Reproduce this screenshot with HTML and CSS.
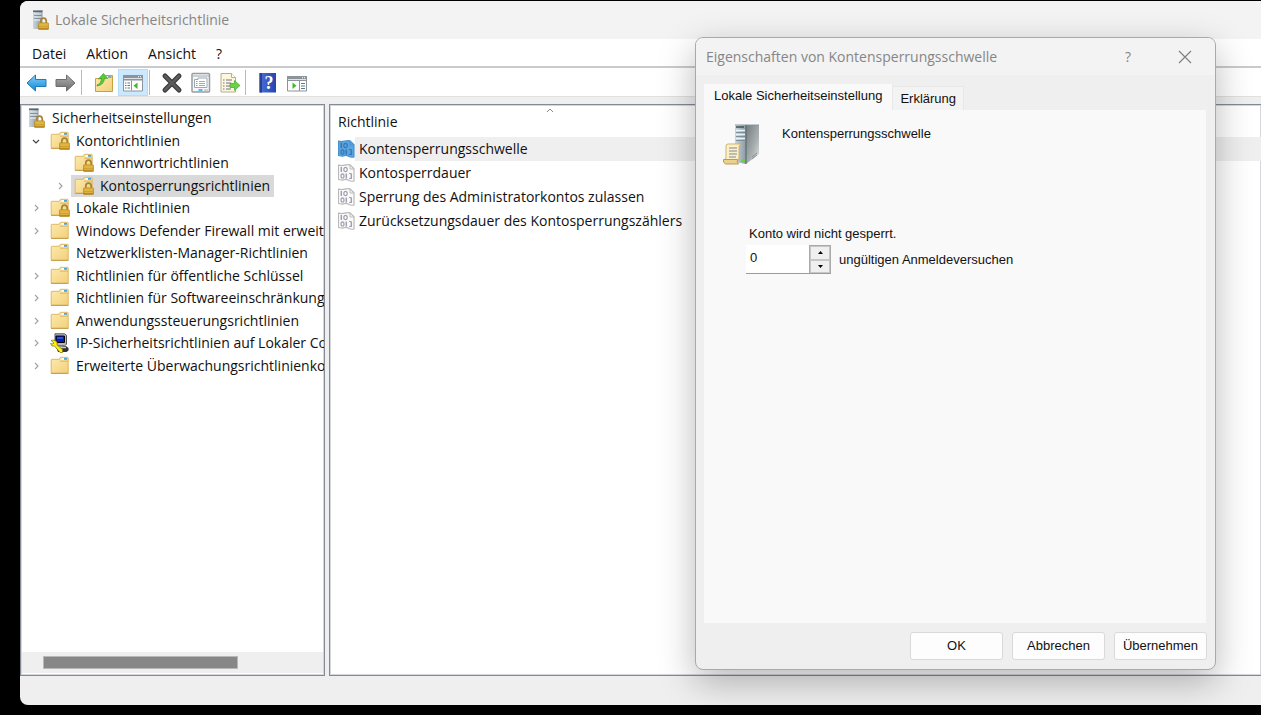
FILE: index.html
```
<!DOCTYPE html>
<html lang="de">
<head>
    <meta charset="UTF-8">
    <meta name="viewport" content="width=device-width, initial-scale=1.0">
    <title>Lokale Sicherheitsrichtlinie</title>
    <link rel="stylesheet" href="styles.css">
</head>
<body>
    <!-- shared icons -->
    <svg class="sprite" aria-hidden="true">
        <defs>
            <linearGradient id="gold" x1="0" y1="0" x2="1" y2="1">
                <stop offset="0" stop-color="#fdeab0"/>
                <stop offset="1" stop-color="#f2d07a"/>
            </linearGradient>
            <linearGradient id="brass" x1="0" y1="0" x2="0" y2="1">
                <stop offset="0" stop-color="#e9bb3e"/>
                <stop offset="1" stop-color="#b18116"/>
            </linearGradient>
            <linearGradient id="steel" x1="0" y1="0" x2="1" y2="0">
                <stop offset="0" stop-color="#cbd5dc"/>
                <stop offset="1" stop-color="#8999a4"/>
            </linearGradient>
            <linearGradient id="side" x1="0" y1="0" x2="1" y2="1">
                <stop offset="0" stop-color="#717b7e"/>
                <stop offset="0.6" stop-color="#a9b0b1"/>
                <stop offset="1" stop-color="#e2e5e5"/>
            </linearGradient>
            <linearGradient id="blue" x1="0" y1="0" x2="0" y2="1">
                <stop offset="0" stop-color="#7fd0fb"/>
                <stop offset="1" stop-color="#1287d6"/>
            </linearGradient>
            <linearGradient id="grey" x1="0" y1="0" x2="0" y2="1">
                <stop offset="0" stop-color="#b0b0b0"/>
                <stop offset="1" stop-color="#6a6a6a"/>
            </linearGradient>
            <linearGradient id="book" x1="0" y1="0" x2="1" y2="0">
                <stop offset="0" stop-color="#4a6fd8"/>
                <stop offset="1" stop-color="#2645ae"/>
            </linearGradient>
        </defs>
        <symbol id="lock" viewBox="0 0 10 12">
            <path d="M2.500 6V3.800a2.500 2.700 0 0 1 5 0V6" fill="none" stroke="#a78338" stroke-width="1.600"/>
            <rect x="0.400" y="5.400" width="9.200" height="6.200" rx="0.600" fill="url(#brass)" stroke="#b28420" stroke-width="0.600"/>
            <path d="M1 7.500h8M1 9.500h8" stroke="#f3cf62" stroke-width="0.600"/>
        </symbol>
        <symbol id="folder" viewBox="0 0 20 20">
            <path d="M1.200 17V4q0-.7.700-.7h7.300l1.200-2h7q.8 0 .8.800V17z" fill="url(#gold)" stroke="#dcb966"/>
            <rect x="11.500" y="2" width="5.500" height="1.800" fill="#fff"/>
            <rect x="14" y="2" width="3" height="1.800" fill="#4ba3dc"/>
            <path d="M10 5.200h8" stroke="#dcb75f"/>
            <path d="M1 17.500h17.500" stroke="#c8a252"/>
        </symbol>
        <symbol id="folder-lock" viewBox="0 0 20 20">
            <use href="#folder" width="20" height="20"/>
            <use href="#lock" x="9" y="6" width="11" height="13"/>
        </symbol>
        <symbol id="server-lock" viewBox="0 0 18 20">
            <path d="M1 .5h9.500v18.500H1z" fill="url(#steel)"/>
            <path d="M1 .5h9.500v1.500H1z" fill="#596871"/>
            <path d="M2 4h7.500M2 7h7.500M2 10h7.500" stroke="#f2f6f8" stroke-width="1.200"/>
            <path d="M2 5.400h7.500M2 8.400h7.500" stroke="#72828e" stroke-width="0.800"/>
            <use href="#lock" x="6" y="7" width="11" height="13"/>
        </symbol>
        <symbol id="policy" viewBox="0 0 17 18">
            <path d="M.5 1.200q3 .8 6 0t5.500-.4l4 4V17q-3 .8-5.500-.8t-6 0L.5 15.500z" fill="var(--paper)" stroke="var(--edge)" stroke-width="1.200"/>
            <path d="M12 1v4h4" fill="none" stroke="var(--edge)"/>
            <path d="M3.300 3v5M8.300 9.500v5M13.300 9.500v5" stroke="var(--ink)" stroke-width="1.500"/>
            <ellipse cx="7.500" cy="5.500" rx="1.700" ry="2.200" fill="none" stroke="var(--ink)" stroke-width="1.200"/>
            <ellipse cx="4.500" cy="12" rx="1.500" ry="2.200" fill="none" stroke="var(--ink)" stroke-width="1.200"/>
            <path d="M11 9.500h2.300M11 14.500h3" stroke="var(--ink)"/>
        </symbol>
        <symbol id="computer" viewBox="0 0 20 20">
            <path d="M5 .8h9.500l2 1.500v9l-2 1.500H5z" fill="#b9b9b9" stroke="#555"/>
            <path d="M6 3h8.500v6.500H6z" fill="#0a1ac0" stroke="#000"/>
            <path d="M7 5h6" stroke="#4d8cf0"/>
            <path d="M6 14l10-1 2.500 2v2.500L16.500 19H8z" fill="#333"/>
            <path d="M8 14.500h8" stroke="#c9c9c9" stroke-width="1.500"/>
            <path d="M1 7.500l3-.5 3 2v3l5.500 4.500v3H10L4.500 13H2L.5 10.500 3 11l1-1z" fill="#ffef14" stroke="#7c7200" stroke-width="0.700"/>
        </symbol>
        <symbol id="right" viewBox="0 0 16 16">
            <path d="M7 5l3 3-3 3" fill="none" stroke="#a3a3a3" stroke-width="1.200"/>
        </symbol>
        <symbol id="down" viewBox="0 0 16 16">
            <path d="M5 7l3 3 3-3" fill="none" stroke="#444" stroke-width="1.200"/>
        </symbol>
    </svg>

    <main class="window">
        <header class="titlebar">
            <svg class="icon-server"><use href="#server-lock"/></svg>
            <span>Lokale Sicherheitsrichtlinie</span>
        </header>

        <nav class="menubar">
            <button type="button">Datei</button>
            <button type="button">Aktion</button>
            <button type="button">Ansicht</button>
            <button type="button">?</button>
        </nav>

        <div class="toolbar">
            <button type="button" aria-label="Zurück">
                <svg viewBox="0 0 22 22"><path d="M1 11L9.500 3v4.500H20v7H9.500V19z" fill="url(#blue)" stroke="#2279b5" stroke-linejoin="round"/></svg>
            </button>
            <button type="button" aria-label="Vorwärts">
                <svg viewBox="0 0 22 22"><path d="M20 11L11.500 3v4.500H1v7h10.500V19z" fill="url(#grey)" stroke="#6d6d6d" stroke-linejoin="round"/></svg>
            </button>
            <span class="separator"></span>
            <button type="button" aria-label="Eine Ebene nach oben">
                <svg viewBox="0 0 22 22">
                    <path d="M2.500 19.500V6.500h9l1-3h7v16z" fill="url(#gold)" stroke="#c99f43"/>
                    <path d="M15 5h3.500" stroke="#4ba3dc" stroke-width="1.500"/>
                    <path d="M4 13q4-1 4.500-6.500L5.500 7 10.500 1.500 14.500 6.500l-3-.2Q11 13 4 14z" fill="#55cf35" stroke="#3b9d28" stroke-width="0.700"/>
                </svg>
            </button>
            <button type="button" class="pressed" aria-label="Konsolenstruktur ein-/ausblenden">
                <svg viewBox="0 0 22 22">
                    <path d="M1.500 3.500h19v15.500h-19z" fill="#fff" stroke="#8c949b"/>
                    <path d="M1 3h20v5.500H1z" fill="#8c949b"/>
                    <path d="M2 6.500h18" stroke="#dfe3e6"/>
                    <path d="M16 4.700h1m1 0h1" stroke="#fff"/>
                    <path d="M9.500 8.500v10" stroke="#8c949b"/>
                    <path d="M3 11h1.500M3 13.500h1.500M3 16h1.500M5.500 11h2.500M5.500 13.500h2.500M5.500 16h2.500" stroke="#5d7894"/>
                    <path d="M15.500 10.500v6.500l-4-3.200z" fill="#42b82c"/>
                </svg>
            </button>
            <span class="separator"></span>
            <button type="button" aria-label="Löschen">
                <svg viewBox="0 0 22 22">
                    <path d="M4 4l14 14M18 4L4 18" stroke="#3b3b3b" stroke-width="5" stroke-linecap="round"/>
                    <path d="M4 4l14 14M18 4L4 18" stroke="#5c5c5c" stroke-width="2.500" stroke-linecap="round"/>
                </svg>
            </button>
            <button type="button" aria-label="Eigenschaften">
                <svg viewBox="0 0 22 22">
                    <rect x="2" y="1.500" width="17.500" height="18.500" rx="1" fill="#f7f7f7" stroke="#989da1" stroke-width="1.500"/>
                    <path d="M3 4h16" stroke="#a4abb1"/>
                    <path d="M4.500 15.500V7.500H8V6h9v9.500z" fill="#fff" stroke="#9aa9b8"/>
                    <path d="M9 9.500h6M9 11.500h6M9 13.500h6" stroke="#8fb0cf"/>
                    <path d="M6 9.500h1.500M6 11.500h1.500M6 13.500h1.500" stroke="#9a9a9a"/>
                    <path d="M8.500 18h4" stroke="#1fa4e8" stroke-width="1.500"/>
                    <path d="M14 18h4" stroke="#aaa"/>
                </svg>
            </button>
            <button type="button" aria-label="Liste exportieren">
                <svg viewBox="0 0 22 22">
                    <path d="M2 1.500h10.500l4 4V20H2z" fill="#fdf8dd" stroke="#b5ae8c"/>
                    <path d="M12.500 1.500v4h4" fill="#fff" stroke="#b5ae8c"/>
                    <path d="M4 8h1.500M4 11h1.500M4 14h1.500M4 17h1.500M7 8h6M7 11h5M7 14h4M7 17h5" stroke="#736e8a"/>
                    <path d="M11 11.500h4.500V8.500l5.500 5-5.500 5v-3H11z" fill="#6dd04a" stroke="#44a62b" stroke-width="0.700"/>
                </svg>
            </button>
            <span class="separator"></span>
            <button type="button" aria-label="Hilfe">
                <svg viewBox="0 0 22 22">
                    <path d="M2.500 1H19v19.500H2.500z" fill="url(#book)"/>
                    <path d="M2.500 1H5v19.500H2.500z" fill="#2a4091"/>
                    <text x="12" y="17" class="help-glyph">?</text>
                </svg>
            </button>
            <button type="button" aria-label="Aktionsbereich ein-/ausblenden">
                <svg viewBox="0 0 22 22">
                    <path d="M1.500 4.500h19v14.500h-19z" fill="#fff" stroke="#8c949b"/>
                    <path d="M1 4h20v5H1z" fill="#8c949b"/>
                    <path d="M2 7.500h18" stroke="#dfe3e6"/>
                    <path d="M16 5.700h1m1 0h1" stroke="#fff"/>
                    <path d="M13.500 9v10" stroke="#8c949b"/>
                    <path d="M15 11.500h4M15 14h4M15 16.500h4" stroke="#5d7894"/>
                    <path d="M6.500 10.500v6.500l4-3.200z" fill="#42b82c"/>
                </svg>
            </button>
        </div>

        <div class="panes">
            <section class="pane tree-pane">
                <ul class="tree">
                    <li><svg class="icon-server"><use href="#server-lock"/></svg><span>Sicherheitseinstellungen</span></li>
                    <li><svg class="expander"><use href="#down"/></svg><span class="node"><svg class="icon"><use href="#folder-lock"/></svg>Kontorichtlinien</span></li>
                    <li class="child"><span class="expander"></span><span class="node"><svg class="icon"><use href="#folder-lock"/></svg>Kennwortrichtlinien</span></li>
                    <li class="child"><svg class="expander"><use href="#right"/></svg><span class="node selected"><svg class="icon"><use href="#folder-lock"/></svg>Kontosperrungsrichtlinien</span></li>
                    <li><svg class="expander"><use href="#right"/></svg><span class="node"><svg class="icon"><use href="#folder-lock"/></svg>Lokale Richtlinien</span></li>
                    <li><svg class="expander"><use href="#right"/></svg><span class="node"><svg class="icon"><use href="#folder"/></svg>Windows Defender Firewall mit erweite</span></li>
                    <li><span class="expander"></span><span class="node"><svg class="icon"><use href="#folder"/></svg>Netzwerklisten-Manager-Richtlinien</span></li>
                    <li><svg class="expander"><use href="#right"/></svg><span class="node"><svg class="icon"><use href="#folder"/></svg>Richtlinien für öffentliche Schlüssel</span></li>
                    <li><svg class="expander"><use href="#right"/></svg><span class="node"><svg class="icon"><use href="#folder"/></svg>Richtlinien für Softwareeinschränkung</span></li>
                    <li><svg class="expander"><use href="#right"/></svg><span class="node"><svg class="icon"><use href="#folder"/></svg>Anwendungssteuerungsrichtlinien</span></li>
                    <li><svg class="expander"><use href="#right"/></svg><span class="node"><svg class="icon"><use href="#computer"/></svg>IP-Sicherheitsrichtlinien auf Lokaler Cc</span></li>
                    <li><svg class="expander"><use href="#right"/></svg><span class="node"><svg class="icon"><use href="#folder"/></svg>Erweiterte Überwachungsrichtlinienko</span></li>
                </ul>
                <div class="scrollbar"><div class="thumb"></div></div>
            </section>

            <section class="pane list-pane">
                <svg class="sort" viewBox="0 0 8 5"><path d="M1 4l3-3 3 3" fill="none" stroke="#8a8a8a"/></svg>
                <table class="policies">
                    <thead>
                        <tr><th>Richtlinie</th></tr>
                    </thead>
                    <tbody>
                        <tr class="current"><td><svg><use href="#policy"/></svg><span>Kontensperrungsschwelle</span></td></tr>
                        <tr><td><svg><use href="#policy"/></svg><span>Kontosperrdauer</span></td></tr>
                        <tr><td><svg><use href="#policy"/></svg><span>Sperrung des Administratorkontos zulassen</span></td></tr>
                        <tr><td><svg><use href="#policy"/></svg><span>Zurücksetzungsdauer des Kontosperrungszählers</span></td></tr>
                    </tbody>
                </table>
            </section>
        </div>
        <footer class="statusbar"></footer>
    </main>

    <form class="dialog" role="dialog" aria-labelledby="dialog-title">
        <header class="dialog-title">
            <span id="dialog-title">Eigenschaften von Kontensperrungsschwelle</span>
            <button type="button">?</button>
            <button type="button" aria-label="Schließen">
                <svg viewBox="0 0 14 14"><path d="M1 1l12 12M13 1L1 13" stroke="#808080" stroke-width="1.200"/></svg>
            </button>
        </header>
        <div class="tabs">
            <button type="button" class="tab active">Lokale Sicherheitseinstellung</button>
            <button type="button" class="tab">Erklärung</button>
        </div>
        <div class="sheet">
            <div class="policy-head">
                <svg viewBox="0 0 40 42">
                    <path d="M13 1.500L24 1v39l-11-2z" fill="url(#steel)"/>
                    <path d="M24 1h13v29L24 40z" fill="url(#side)"/>
                    <path d="M13 1h24" stroke="#8a969c"/>
                    <path d="M14 3h8" stroke="#41505a" stroke-width="1.500"/>
                    <path d="M14 6.500h9M14 10.500h9M14 14.500h9" stroke="#eaf3f7" stroke-width="1.500"/>
                    <path d="M14 8.500h9M14 12.500h9M14 16.500h9" stroke="#7d909c"/>
                    <path d="M24 1v39" stroke="#59666d"/>
                    <path d="M30 33l5-4M30 35l5-4" stroke="#7c8685" stroke-width="0.800"/>
                    <path d="M4 22q0-2 2-2h13q-2 1-2 3v11l-2 4H3q-1-3 1-4z" fill="#fcf0c6" stroke="#cdb373"/>
                    <path d="M1.500 35.500h14q-1 2.500 1 4.500h-13q-3-1.500-2-4.500z" fill="#ead28c" stroke="#bb9c55"/>
                    <path d="M7 24h8M7 27h8M7 30h8M7 33h7" stroke="#81889a"/>
                    <circle cx="21" cy="36.500" r="1.800" fill="#5be01c"/>
                </svg>
                <span>Kontensperrungsschwelle</span>
            </div>
            <div class="threshold">
                <label for="attempts">Konto wird nicht gesperrt.</label>
                <div class="threshold-row">
                    <div class="spinner">
                        <input type="number" id="attempts" value="0" min="0">
                        <div class="steps">
                            <button type="button" aria-label="Erhöhen"><svg viewBox="0 0 5 3"><path d="M0 3l2.500-3L5 3z"/></svg></button>
                            <button type="button" aria-label="Verringern"><svg viewBox="0 0 5 3"><path d="M0 0l2.500 3L5 0z"/></svg></button>
                        </div>
                    </div>
                    <span>ungültigen Anmeldeversuchen</span>
                </div>
            </div>
        </div>
        <div class="actions">
            <button type="submit">OK</button>
            <button type="button">Abbrechen</button>
            <button type="button">Übernehmen</button>
        </div>
    </form>
</body>
</html>
```
FILE: styles.css
```
* {
    box-sizing: border-box;
}
body {
    margin: 0;
    padding: 1px 0 10px 20px;
    height: 100vh;
    overflow: hidden;
    background-color: #000;
    color: #111;
    font-family: "Open Sans", "Noto Sans", sans-serif;
    font-size: 14px;
    line-height: 20px;
}
button,
input {
    margin: 0;
    padding: 0;
    border: none;
    background: none;
    color: inherit;
    font: inherit;
}
svg {
    display: block;
    flex: none;
}
.sprite {
    position: absolute;
    width: 0;
    height: 0;
}

/* main window */
.window {
    display: flex;
    flex-direction: column;
    height: 100%;
    border-radius: 8px 0 0 8px;
    overflow: hidden;
    background-color: #efefef;
}
.titlebar {
    display: flex;
    align-items: center;
    gap: 5px;
    height: 38px;
    padding-left: 12px;
    background-color: #f3f3f3;
    color: #868686;
}
.icon-server {
    width: 18px;
    height: 20px;
}
.menubar {
    display: flex;
    align-items: center;
    gap: 20px;
    height: 29px;
    padding: 2px 0 0 12px;
    border-bottom: 2px solid #c8cace;
    background-color: #fff;
}
.toolbar {
    display: flex;
    align-items: center;
    height: 29px;
    padding: 1px 0 0 2px;
    border-bottom: 1px solid #e0e0e0;
    background-color: #fff;
}
.toolbar button {
    display: flex;
    align-items: center;
    justify-content: center;
    width: 29px;
    height: 27px;
}
.toolbar svg {
    width: 22px;
    height: 22px;
}
.toolbar .pressed {
    width: 30px;
    border: 1px solid #b5dcfa;
    background-color: #cce8ff;
}
.separator {
    width: 1px;
    height: 25px;
    margin: 0 7px 0 1px;
    background-color: #b9b9b9;
}
.help-glyph {
    fill: #fff;
    font-family: "Liberation Serif", serif;
    font-size: 18px;
    font-weight: bold;
    text-anchor: middle;
}

/* panes */
.panes {
    display: flex;
    flex: 1;
    gap: 4px;
    min-height: 0;
    padding-top: 7px;
}
.pane {
    border: 1px solid #848b96;
    box-shadow: inset 0 0 0 1px #d3d7dc;
    background-color: #fff;
    overflow: hidden;
}
.tree-pane {
    display: flex;
    flex-direction: column;
    justify-content: space-between;
    width: 305px;
    padding: 2px 1px;
}
.tree {
    display: grid;
    grid-template-rows: repeat(12, 1fr);
    height: 270px;
    margin: 0;
    padding: 0 0 0 6px;
    list-style: none;
    white-space: nowrap;
}
.tree li {
    display: flex;
    align-items: center;
    gap: 3px;
    min-width: 0;
}
.tree .icon-server {
    margin-right: 3px;
}
.tree .child {
    padding-left: 24px;
}
.expander {
    flex: none;
    width: 16px;
    height: 16px;
}
.node {
    display: flex;
    align-items: center;
    gap: 6px;
    height: 22px;
    padding: 0 4px 0 3px;
}
.node .icon {
    width: 20px;
    height: 20px;
}
.selected {
    background-color: #d9d9d9;
}
.scrollbar {
    padding: 4px 85px 4px 21px;
    background-color: #efefef;
}
.thumb {
    height: 13px;
    border: 1px solid #b8b8b8;
    background-color: #878787;
}
.list-pane {
    position: relative;
    flex: 1;
    border-right: none;
}
.sort {
    position: absolute;
    top: 3px;
    left: 216px;
    width: 8px;
    height: 5px;
}
.policies {
    width: 100%;
    margin-top: 5px;
    border-collapse: collapse;
}
.policies th {
    height: 27px;
    padding: 0 0 3px 8px;
    font-weight: normal;
    text-align: left;
}
.policies td {
    display: flex;
    align-items: center;
    height: 24px;
    padding: 0 0 0 8px;
    --paper: #fbfbfb;
    --edge: #b9b9b9;
    --ink: #a39fb0;
}
.policies svg {
    width: 17px;
    height: 18px;
}
.policies span {
    flex: 1;
    padding: 2px 4px;
}
.policies .current td {
    --paper: #5ba3dc;
    --edge: #4a92cf;
    --ink: #3479b8;
}
.current span {
    background-color: #efefef;
}
.statusbar {
    height: 29px;
}

/* properties dialog */
.dialog {
    position: absolute;
    top: 37px;
    right: 45px;
    display: flex;
    flex-direction: column;
    width: 521px;
    height: 633px;
    border: 1px solid #a9a9a9;
    border-radius: 8px;
    background-color: #efefef;
    box-shadow: 0 12px 36px rgba(0, 0, 0, 0.28);
    font-family: "Liberation Sans", Arial, sans-serif;
    font-size: 13px;
    line-height: 16px;
    overflow: hidden;
}
.dialog-title {
    display: flex;
    align-items: center;
    height: 37px;
    padding: 0 15px 0 10px;
    background-color: #f3f3f3;
    color: #868686;
    font-family: "Open Sans", "Noto Sans", sans-serif;
    font-size: 14px;
}
.dialog-title span {
    flex: 1;
}
.dialog-title button {
    display: flex;
    align-items: center;
    justify-content: center;
    width: 30px;
    height: 28px;
    margin-left: 27px;
}
.dialog-title svg {
    width: 14px;
    height: 14px;
}
.tabs {
    display: flex;
    align-items: flex-end;
    padding: 9px 8px 0;
}
.tab {
    height: 24px;
    padding: 0 7px;
    border: 1px solid #e8e8e8;
    border-bottom: none;
    background-color: #f3f3f3;
}
.tab.active {
    height: 26px;
    padding: 0 10px 2px;
    border: none;
    background-color: #f9f9f9;
}
.sheet {
    flex: 1;
    margin: 0 9px 0 8px;
    padding: 14px 18px;
    background-color: #f9f9f9;
}
.policy-head {
    display: flex;
    gap: 20px;
}
.policy-head svg {
    width: 40px;
    height: 42px;
}
.policy-head span {
    padding-top: 2px;
}
.threshold {
    padding: 60px 0 0 24px;
}
.threshold label {
    display: block;
    padding-left: 3px;
}
.threshold-row {
    display: flex;
    align-items: center;
    gap: 8px;
    margin-top: 3px;
}
.spinner {
    display: flex;
    width: 85px;
    height: 29px;
    border-bottom: 1px solid #9b9b9b;
    background-color: #fff;
}
.spinner input {
    flex: 1;
    min-width: 0;
    padding: 0 4px 3px;
    appearance: textfield;
    -moz-appearance: textfield;
}
.spinner input::-webkit-inner-spin-button,
.spinner input::-webkit-outer-spin-button {
    -webkit-appearance: none;
    margin: 0;
}
.steps {
    display: flex;
    flex-direction: column;
    width: 22px;
    border: 1px solid #aaa;
    border-bottom: none;
}
.steps button {
    display: flex;
    flex: 1;
    align-items: center;
    justify-content: center;
    border: 1px solid #c6c6c6;
    background-color: #efefef;
}
.steps svg {
    width: 5px;
    height: 3px;
}
.actions {
    display: flex;
    justify-content: flex-end;
    gap: 9px;
    padding: 9px 8px;
}
.actions button {
    width: 93px;
    height: 28px;
    border: 1px solid #d9d9d9;
    border-radius: 3px;
    background-color: #fdfdfd;
}
```
